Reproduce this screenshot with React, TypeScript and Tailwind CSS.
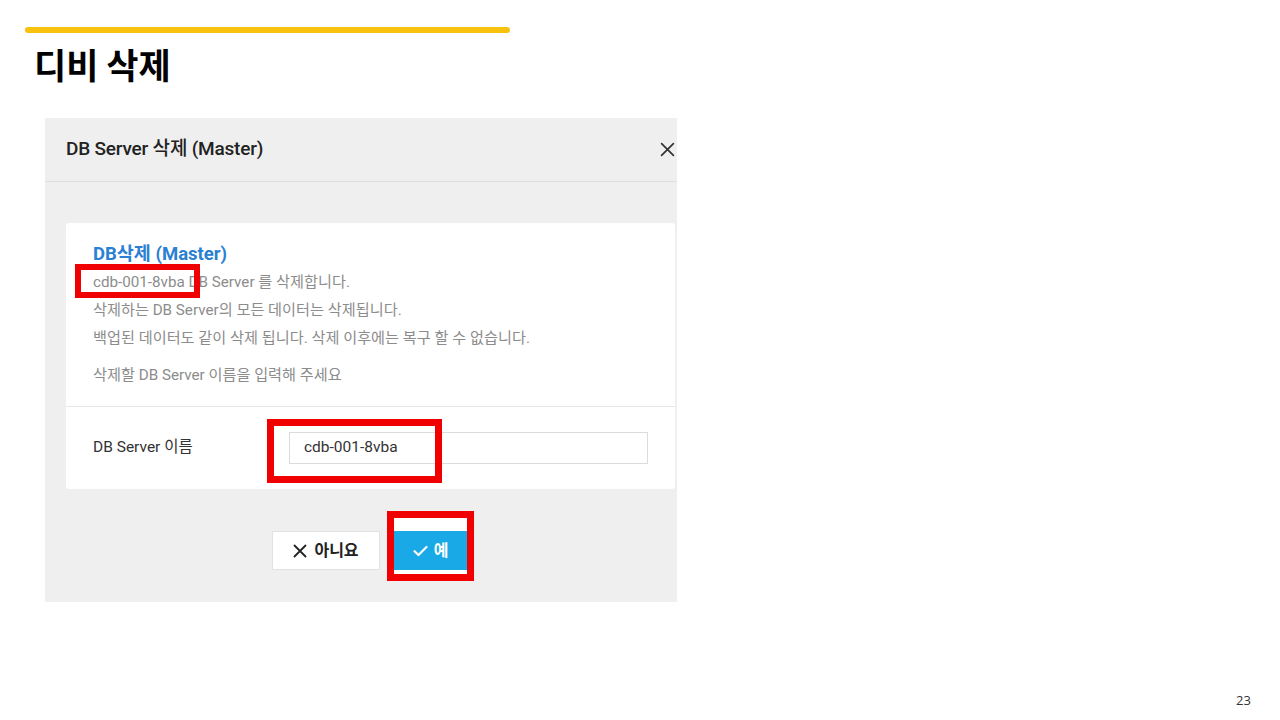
import React from "react";

const ui = { fontFamily: "Roboto, 'Noto Sans CJK KR', sans-serif" };

function CloseIcon({ size = 14, stroke = 1.6, color = "#333" }: { size?: number; stroke?: number; color?: string }) {
  return (
    <svg width={size} height={size} viewBox="0 0 14 14" fill="none">
      <path d="M1.5 1.5 L12.5 12.5 M12.5 1.5 L1.5 12.5" stroke={color} strokeWidth={stroke} strokeLinecap="round" />
    </svg>
  );
}

function CheckIcon() {
  return (
    <svg width="15" height="12" viewBox="0 0 15 12" fill="none">
      <path d="M1.5 6.2 L5.5 10 L13.5 2" stroke="#fff" strokeWidth="2.2" strokeLinecap="round" strokeLinejoin="round" />
    </svg>
  );
}

export default function App() {
  return (
    <div className="w-[1280px] h-[720px] bg-white flex flex-col relative overflow-hidden">
      {/* accent bar + slide title */}
      <div className="mt-[27px] ml-[25px] w-[485px] h-[6px] rounded-full bg-[#f8c10c]" />
      <h1
        className="mt-[10px] ml-[34px] text-[35px] leading-[42px] font-bold text-black"
        style={{ fontFamily: "'Noto Sans CJK KR', sans-serif" }}
      >
        디비 삭제
      </h1>

      {/* dialog */}
      <div className="mt-[33px] ml-[45px] w-[632px] h-[484px] bg-[#efefef] flex flex-col" style={ui}>
        <div className="h-[64px] shrink-0 flex items-center justify-between pl-[21px] pr-[2px] border-b border-[#dedede]">
          <span className="text-[19px] font-medium text-[#222] tracking-[-0.2px]">DB Server 삭제 (Master)</span>
          <CloseIcon size={15} />
        </div>

        <div className="mt-[41px] ml-[21px] mr-[2px] bg-white rounded-[3px] flex flex-col">
          <div className="pl-[27px] pt-[17px] pb-[17px] flex flex-col text-[15.2px] leading-[28px] text-[#8c8c8c]">
            <div className="text-[18.5px] font-bold text-[#2a80d2]">DB삭제 (Master)</div>
            <div>
              <span className="relative inline-block">
                cdb-001-8vba
                <span className="absolute left-[-18px] right-[-15px] top-[-4px] bottom-[-2px] border-[6px] border-[#f00000]" />
              </span>{" "}
              DB Server 를 삭제합니다.
            </div>
            <div>삭제하는 DB Server의 모든 데이터는 삭제됩니다.</div>
            <div>백업된 데이터도 같이 삭제 됩니다. 삭제 이후에는 복구 할 수 없습니다.</div>
            <div className="mt-[9px]">삭제할 DB Server 이름을 입력해 주세요</div>
          </div>
          <div className="h-px bg-[#e6e6e6]" />
          <div className="h-[82px] flex items-center pl-[27px]">
            <span className="w-[196px] text-[15.5px] text-[#333]">DB Server 이름</span>
            <div className="relative">
              <div className="w-[359px] h-[32px] border border-[#dcdcdc] flex items-center pl-[14px] text-[15.5px] text-[#333]">
                cdb-001-8vba
              </div>
              <span className="absolute left-[-22px] top-[-13px] w-[175px] h-[64px] border-[7px] border-[#f00000]" />
            </div>
          </div>
        </div>

        {/* action buttons */}
        <div className="mt-[42px] flex items-center pl-[227px] gap-[14px]">
          <div className="w-[108px] h-[39px] bg-white border border-[#e2e2e2] flex items-center justify-center gap-[7px] text-[16px] font-bold text-[#222]">
            <CloseIcon size={14} stroke={1.8} color="#222" />
            <span>아니요</span>
          </div>
          <div className="relative">
            <span className="absolute left-[-7px] right-[-7px] top-[-20px] bottom-[-11px] bg-white border-[7px] border-[#f00000]" />
            <div className="relative w-[73px] h-[39px] bg-[#19a9e6] flex items-center justify-center gap-[6px] text-[16px] font-bold text-white">
              <CheckIcon />
              <span>예</span>
            </div>
          </div>
        </div>
      </div>

      <span
        className="absolute left-[1236px] top-[691px] text-[13px] text-[#333]"
        style={{ fontFamily: "'Open Sans', sans-serif" }}
      >
        23
      </span>
    </div>
  );
}
